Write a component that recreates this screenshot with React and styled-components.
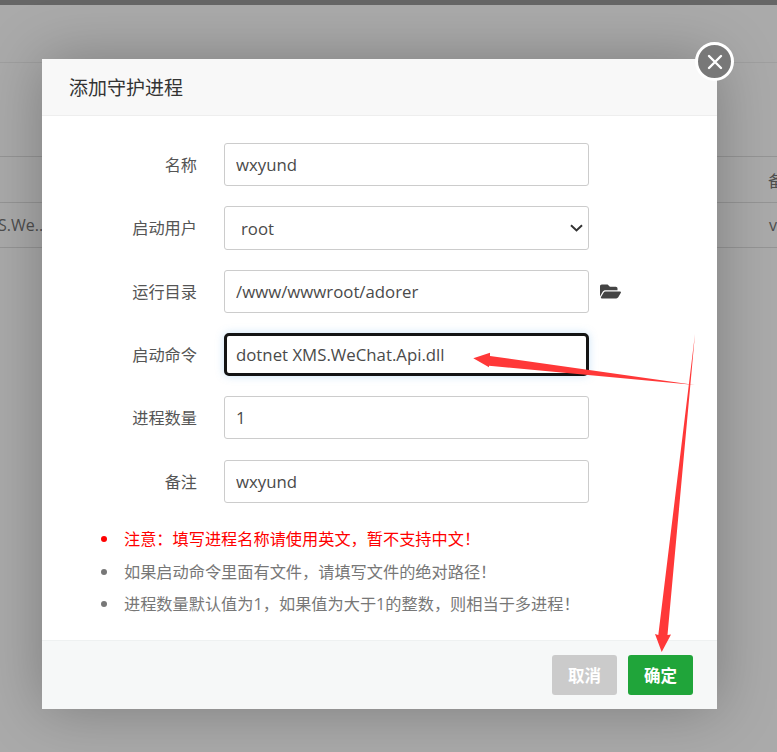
import styled, { createGlobalStyle } from "styled-components";
import { FaFolderOpen } from "react-icons/fa";

const GlobalStyle = createGlobalStyle`
  html, body {
    margin: 0;
    height: 100%;
    overflow: hidden;
    background: #aaaaaa;
    font-family: "Open Sans", "Liberation Sans", "Noto Sans CJK SC", sans-serif;
    color: #555;
  }
`;

const chevron =
  "data:image/svg+xml,%3Csvg xmlns='http://www.w3.org/2000/svg' width='13' height='8' viewBox='0 0 13 8'%3E%3Cpath d='M1 1.2 6.5 6.4 12 1.2' fill='none' stroke='%23333' stroke-width='2'/%3E%3C/svg%3E";

const Page = styled.div`
  position: relative;
  width: 777px;
  height: 752px;
  overflow: hidden;
`;

const TopBar = styled.div`
  height: 5px;
  background: #666;
`;

const PageHead = styled.div`
  height: 57px;
  border-bottom: 1px solid #9f9f9f;
`;

const BgTable = styled.div`
  margin-top: 93px;
  border-top: 1px solid #959595;
`;

const BgRow = styled.div`
  height: ${(p) => p.$h}px;
  border-bottom: 1px solid #959595;
  display: flex;
  justify-content: space-between;
  align-items: center;
  font-size: 16px;
  color: #4e4e4e;
  white-space: nowrap;
  padding-left: ${(p) => p.$left || 768}px;
`;

const BgCell = styled.span`
  margin-left: ${(p) => p.$shift || 0}px;
`;

const Modal = styled.div`
  position: absolute;
  left: 42px;
  top: 59px;
  width: 675px;
  height: 650px;
  display: flex;
  flex-direction: column;
  background: #fff;
  border-radius: 2px;
  box-shadow: 0 0 60px rgba(0, 0, 0, 0.27);
`;

const ModalTitle = styled.div`
  height: 56px;
  flex: none;
  display: flex;
  align-items: center;
  padding-left: 27px;
  background: #f8f8f8;
  border-bottom: 1px solid #eee;
  font-size: 19px;
  color: #333;
`;

const CloseBtn = styled.div`
  position: absolute;
  right: -17px;
  top: -17px;
  width: 33px;
  height: 33px;
  border: 3px solid #fff;
  border-radius: 50%;
  background: #787878;
  display: flex;
  align-items: center;
  justify-content: center;
`;

const ModalBody = styled.div`
  flex: 1;
  padding-top: 27px;
  display: flex;
  flex-direction: column;
`;

const FormRow = styled.div`
  display: flex;
  align-items: center;
  height: ${(p) => p.$h || 43}px;
  margin-bottom: ${(p) => p.$gap || 20}px;
`;

const Label = styled.label`
  width: 155px;
  flex: none;
  text-align: right;
  font-size: 16.2px;
  color: #555;
  margin-right: 27px;
  position: relative;
  top: -1px;
`;

const TextInput = styled.input`
  box-sizing: border-box;
  width: 365px;
  height: 100%;
  padding: 0 ${(p) => (p.$focused ? 9 : 11)}px;
  font: inherit;
  font-size: 16.8px;
  color: #4a4a4a;
  background: #fff;
  border: ${(p) => (p.$focused ? "3px solid #141414" : "1px solid #ccc")};
  border-radius: ${(p) => (p.$focused ? 5 : 3)}px;
  outline: none;
  box-shadow: ${(p) => (p.$focused ? "0 0 8px rgba(102, 175, 233, 0.35)" : "none")};
`;

const SelectInput = styled.select`
  box-sizing: border-box;
  width: 365px;
  height: 100%;
  padding: 0 16px;
  font: inherit;
  font-size: 16.8px;
  color: #4a4a4a;
  border: 1px solid #ccc;
  border-radius: 3px;
  outline: none;
  appearance: none;
  background: #fff url("${chevron}") no-repeat right 5px center;
`;

const FolderBtn = styled.span`
  display: flex;
  margin-left: 11px;
  color: #444;
  font-size: 21px;
`;

const Tips = styled.ul`
  list-style: none;
  margin: 0;
  padding: 0 0 0 82px;
`;

const Tip = styled.li`
  position: relative;
  height: 32.5px;
  line-height: 33px;
  font-size: 16.2px;
  white-space: nowrap;
  color: ${(p) => (p.$warn ? "#f00" : "#777")};

  &::before {
    content: "";
    position: absolute;
    left: -23px;
    top: 13px;
    width: 6px;
    height: 6px;
    border-radius: 50%;
    background: currentColor;
  }
`;

const ModalFoot = styled.div`
  height: 68px;
  flex: none;
  display: flex;
  justify-content: flex-end;
  align-items: center;
  gap: 11px;
  padding-right: 24px;
  background: #f6f8f8;
  border-top: 1px solid #eef1f1;
`;

const Btn = styled.button`
  width: 65px;
  height: 40px;
  border: none;
  border-radius: 3px;
  padding: 0;
  font: inherit;
  font-size: 16.5px;
  font-weight: 700;
  color: #fff;
  background: ${(p) => (p.$primary ? "#20a53a" : "#cbcbcb")};
`;

const Arrows = styled.svg`
  position: absolute;
  left: 0;
  top: 0;
  pointer-events: none;
`;

export default function App() {
  return (
    <Page>
      <GlobalStyle />
      <TopBar />
      <PageHead />
      <BgTable>
        <BgRow $h={45}>
          <BgCell>备</BgCell>
        </BgRow>
        <BgRow $h={44} $left={1}>
          <BgCell $shift={-3}>S.We..</BgCell>
          <BgCell>v</BgCell>
        </BgRow>
      </BgTable>

      <Modal>
        <ModalTitle>添加守护进程</ModalTitle>
        <CloseBtn>
          <svg width="18" height="18" viewBox="0 0 18 18">
            <path d="M3 3 15 15M15 3 3 15" stroke="#fff" strokeWidth="2.4" strokeLinecap="round" />
          </svg>
        </CloseBtn>
        <ModalBody>
          <FormRow>
            <Label>名称</Label>
            <TextInput readOnly value="wxyund" />
          </FormRow>
          <FormRow $h={44}>
            <Label>启动用户</Label>
            <SelectInput defaultValue="root">
              <option value="root">root</option>
            </SelectInput>
          </FormRow>
          <FormRow>
            <Label>运行目录</Label>
            <TextInput readOnly value="/www/wwwroot/adorer" />
            <FolderBtn>
              <FaFolderOpen />
            </FolderBtn>
          </FormRow>
          <FormRow>
            <Label>启动命令</Label>
            <TextInput readOnly $focused value="dotnet XMS.WeChat.Api.dll" />
          </FormRow>
          <FormRow $gap={21}>
            <Label>进程数量</Label>
            <TextInput readOnly value="1" />
          </FormRow>
          <FormRow>
            <Label>备注</Label>
            <TextInput readOnly value="wxyund" />
          </FormRow>
          <Tips>
            <Tip $warn>{"注意\uFF1A填写进程名称请使用英文\uFF0C暂不支持中文\uFF01"}</Tip>
            <Tip>{"如果启动命令里面有文件\uFF0C请填写文件的绝对路径\uFF01"}</Tip>
            <Tip>{"进程数量默认值为1\uFF0C如果值为大于1的整数\uFF0C则相当于多进程\uFF01"}</Tip>
          </Tips>
        </ModalBody>
        <ModalFoot>
          <Btn>取消</Btn>
          <Btn $primary>确定</Btn>
        </ModalFoot>
      </Modal>

      <Arrows width="777" height="752" viewBox="0 0 777 752">
        <polygon points="695,385 489,365.7 489,367.3 473.3,358.3 490,352.7 490,356" fill="#ff3838" />
        <polygon points="695,334 667.5,635 671,634.5 661.7,652 655,634 658.3,635" fill="#ff3838" />
      </Arrows>
    </Page>
  );
}
